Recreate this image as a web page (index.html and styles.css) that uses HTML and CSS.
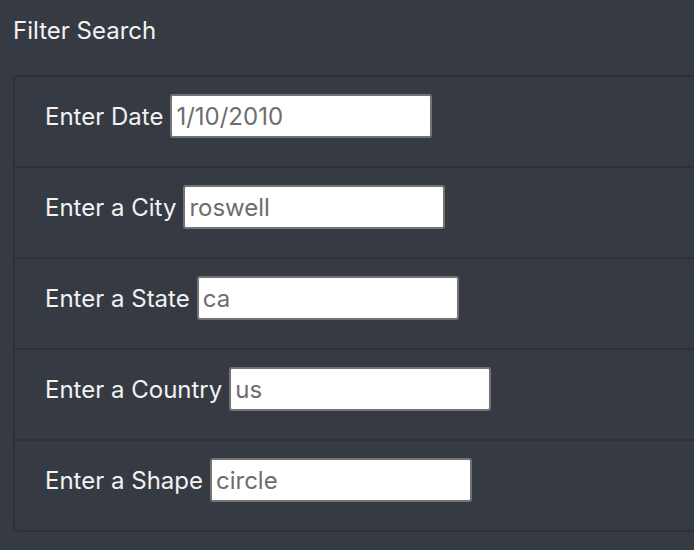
FILE: index.html
```html
<!DOCTYPE html>
<html>
<head>
<meta charset="utf-8">
<link rel="stylesheet" href="styles.css">
</head>
<body>
<div class="page">
  <h3 class="title">Filter Search</h3>
  <ul class="filters">
    <li class="filter"><label class="label" for="datetime">Enter Date</label><input class="field" id="datetime" type="text" placeholder="1/10/2010"></li>
    <li class="filter"><label class="label" for="city">Enter a City</label><input class="field" id="city" type="text" placeholder="roswell"></li>
    <li class="filter"><label class="label" for="state">Enter a State</label><input class="field" id="state" type="text" placeholder="ca"></li>
    <li class="filter"><label class="label" for="country">Enter a Country</label><input class="field" id="country" type="text" placeholder="us"></li>
    <li class="filter"><label class="label" for="shape">Enter a Shape</label><input class="field" id="shape" type="text" placeholder="circle"></li>
  </ul>
</div>
</body>
</html>
```
FILE: styles.css
```css
html, body {
  margin: 0;
  padding: 0;
  background: #363a42;
  overflow: hidden;
}
body {
  font-family: Inter, "Noto Sans", sans-serif;
  color: #f2f2f2;
}
.page {
  padding: 14px 0 0 13px;
}
.title {
  margin: 0 0 27px 0;
  font-size: 24px;
  font-weight: 400;
  line-height: 34px;
}
.filters {
  list-style: none;
  margin: 0;
  padding: 0;
  width: 720px;
  border: 2px solid #2e3238;
  border-radius: 5px;
}
.filter {
  display: flex;
  align-items: center;
  gap: 7px;
  padding: 17px 30px 28px 30px;
  border-top: 2px solid #2e3238;
}
.filter:first-child {
  border-top: none;
}
.label {
  font-size: 24px;
  line-height: 28px;
  padding-top: 2px;
}
.field {
  box-sizing: border-box;
  width: 262px;
  height: 44px;
  margin: 0;
  padding: 0 4px;
  border: 2px solid #737373;
  border-radius: 3px;
  background: #fff;
  font-family: Inter, "Noto Sans", sans-serif;
  font-size: 24px;
  outline: none;
}
.field::placeholder {
  color: #6d6d6d;
  opacity: 1;
}
```
